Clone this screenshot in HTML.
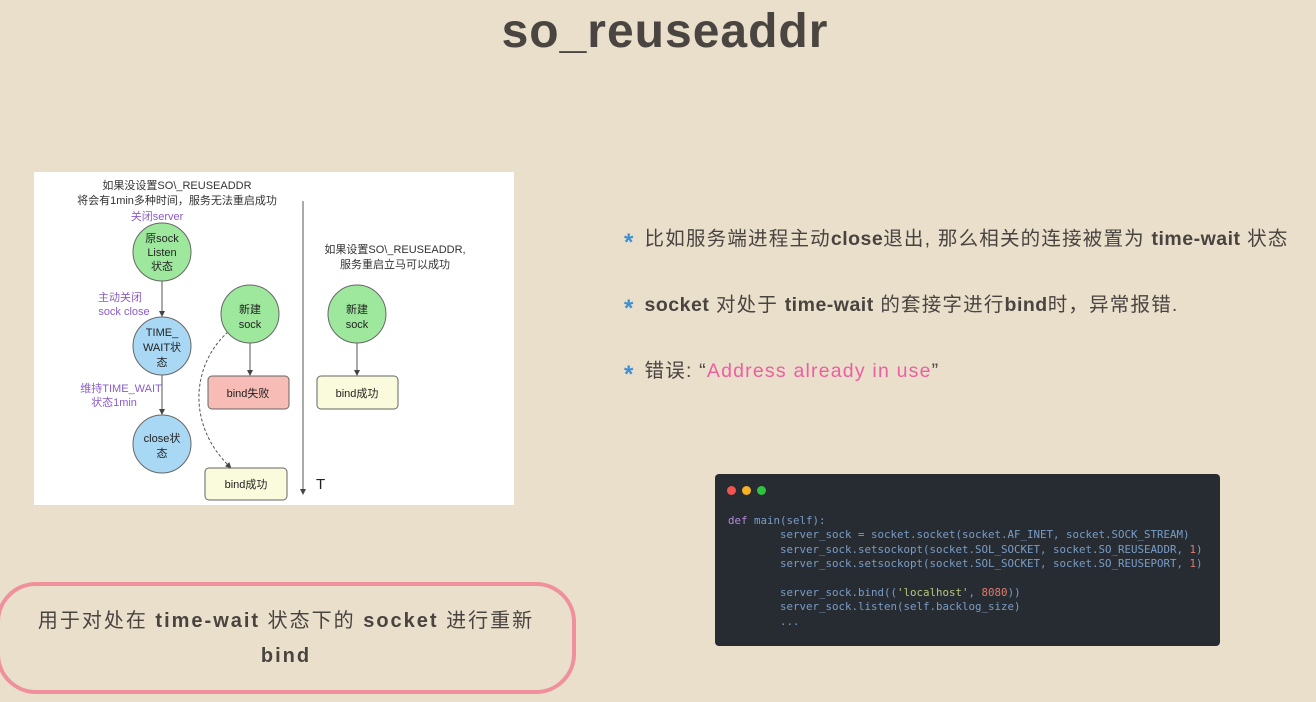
<!DOCTYPE html>
<html><head><meta charset="utf-8"><style>
body{margin:0;width:1316px;height:702px;background:#e9dfcb;position:relative;overflow:hidden;font-family:"Liberation Sans","Noto Sans CJK SC",sans-serif;color:#4a4440}
.title{position:absolute;left:0;width:1330px;top:4px;text-align:center;font-size:48px;font-weight:bold;color:#4a4541;letter-spacing:1px}
.b{position:absolute;left:624px;font-size:19.5px;letter-spacing:1.2px;color:#4a4440;white-space:nowrap}
.b .s{color:#3a8fd8;font-weight:bold;font-size:24px;margin-right:10px;position:relative;top:5px}
.b b{font-weight:bold;letter-spacing:0.5px}
.box{position:absolute;left:-4px;top:582px;width:572px;height:104px;border:4px solid #f0909c;border-radius:40px;text-align:center;font-size:20px;letter-spacing:2px;line-height:35px;box-sizing:content-box}
.box div{padding-top:18px}
.code{position:absolute;left:715px;top:474px;width:505px;height:172px;background:#272c33;border-radius:4px;font-family:"DejaVu Sans Mono","Liberation Mono",monospace;font-size:10.8px;color:#7a9cc6}
.code pre{margin:0;position:absolute;left:13px;top:40px;line-height:14.4px;font-family:inherit}
.dot{position:absolute;top:12px;width:9px;height:9px;border-radius:50%}
</style></head><body>
<div class="title">so_reuseaddr</div>

<svg style="position:absolute;left:34px;top:172px" width="480" height="333" viewBox="0 0 480 333" font-family="Liberation Sans, Noto Sans CJK SC, sans-serif" font-size="11">
<rect width="480" height="333" fill="#fff"/>
<defs><marker id="a" markerWidth="8" markerHeight="8" refX="4" refY="4" orient="auto"><path d="M0,1 L6,4 L0,7z" fill="#444"/></marker></defs>
<g text-anchor="middle" fill="#333">
<text x="143" y="17">如果没设置SO\_REUSEADDR</text>
<text x="143" y="32">将会有1min多种时间，服务无法重启成功</text>
<text x="361" y="81">如果设置SO\_REUSEADDR,</text>
<text x="361" y="96">服务重启立马可以成功</text>
</g>
<g text-anchor="middle" fill="#8a5cc8">
<text x="123" y="48">关闭server</text>
<text x="86" y="129">主动关闭</text>
<text x="90" y="143">sock close</text>
<text x="87" y="220">维持TIME_WAIT</text>
<text x="80" y="234">状态1min</text>
</g>
<g stroke="#555" stroke-width="1">
<line x1="128" y1="109" x2="128" y2="143" marker-end="url(#a)"/>
<line x1="128" y1="203" x2="128" y2="241" marker-end="url(#a)"/>
<line x1="216" y1="171" x2="216" y2="202" marker-end="url(#a)"/>
<line x1="323" y1="171" x2="323" y2="202" marker-end="url(#a)"/>
<line x1="269" y1="29" x2="269" y2="321" marker-end="url(#a)"/>
<path d="M194,160 C160,190 150,250 196,295" fill="none" stroke-dasharray="3,2" marker-end="url(#a)"/>
</g>
<g stroke="#666" stroke-width="1">
<circle cx="128" cy="80" r="29" fill="#9ee89e"/>
<circle cx="128" cy="174" r="29" fill="#a9d8f5"/>
<circle cx="128" cy="272" r="29" fill="#a9d8f5"/>
<circle cx="216" cy="142" r="29" fill="#9ee89e"/>
<circle cx="323" cy="142" r="29" fill="#9ee89e"/>
<rect x="174" y="204" width="81" height="33" rx="4" fill="#f7bcb6"/>
<rect x="283" y="204" width="81" height="33" rx="4" fill="#fafadc"/>
<rect x="171" y="296" width="82" height="32" rx="4" fill="#fafadc"/>
</g>
<g text-anchor="middle" fill="#222">
<text x="128" y="70">原sock</text><text x="128" y="84">Listen</text><text x="128" y="98">状态</text>
<text x="128" y="164">TIME_</text><text x="128" y="179">WAIT状</text><text x="128" y="194">态</text>
<text x="128" y="270">close状</text><text x="128" y="285">态</text>
<text x="216" y="141">新建</text><text x="216" y="156">sock</text>
<text x="323" y="141">新建</text><text x="323" y="156">sock</text>
<text x="214" y="225">bind失败</text>
<text x="323" y="225">bind成功</text>
<text x="212" y="316">bind成功</text>
<text x="282" y="317" font-size="15" text-anchor="start">T</text>
</g>
</svg>

<div class="b" style="top:222px"><span class="s">*</span>比如服务端进程主动<b>close</b>退出, 那么相关的连接被置为 <b>time-wait</b> 状态</div>
<div class="b" style="top:288px"><span class="s">*</span><b>socket</b> 对处于 <b>time-wait</b> 的套接字进行<b>bind</b>时，异常报错.</div>
<div class="b" style="top:354px"><span class="s">*</span>错误: “<span style="color:#ec5fa0">Address already in use</span>”</div>

<div class="code">
<div class="dot" style="left:12px;background:#f2534f"></div>
<div class="dot" style="left:27px;background:#f5b324"></div>
<div class="dot" style="left:42px;background:#2dc341"></div>
<pre><span style="color:#b48ad8">def</span> main(self):
        server_sock = socket.socket(socket.AF_INET, socket.SOCK_STREAM)
        server_sock.setsockopt(socket.SOL_SOCKET, socket.SO_REUSEADDR, <span style="color:#e07c6c">1</span>)
        server_sock.setsockopt(socket.SOL_SOCKET, socket.SO_REUSEPORT, <span style="color:#e07c6c">1</span>)

        server_sock.bind((<span style="color:#b7c67a">'localhost'</span>, <span style="color:#e07c6c">8080</span>))
        server_sock.listen(self.backlog_size)
        ...</pre>
</div>

<div class="box"><div>用于对处在 <b>time-wait</b> 状态下的 <b>socket</b> 进行重新<br><b>bind</b></div></div>
</body></html>
